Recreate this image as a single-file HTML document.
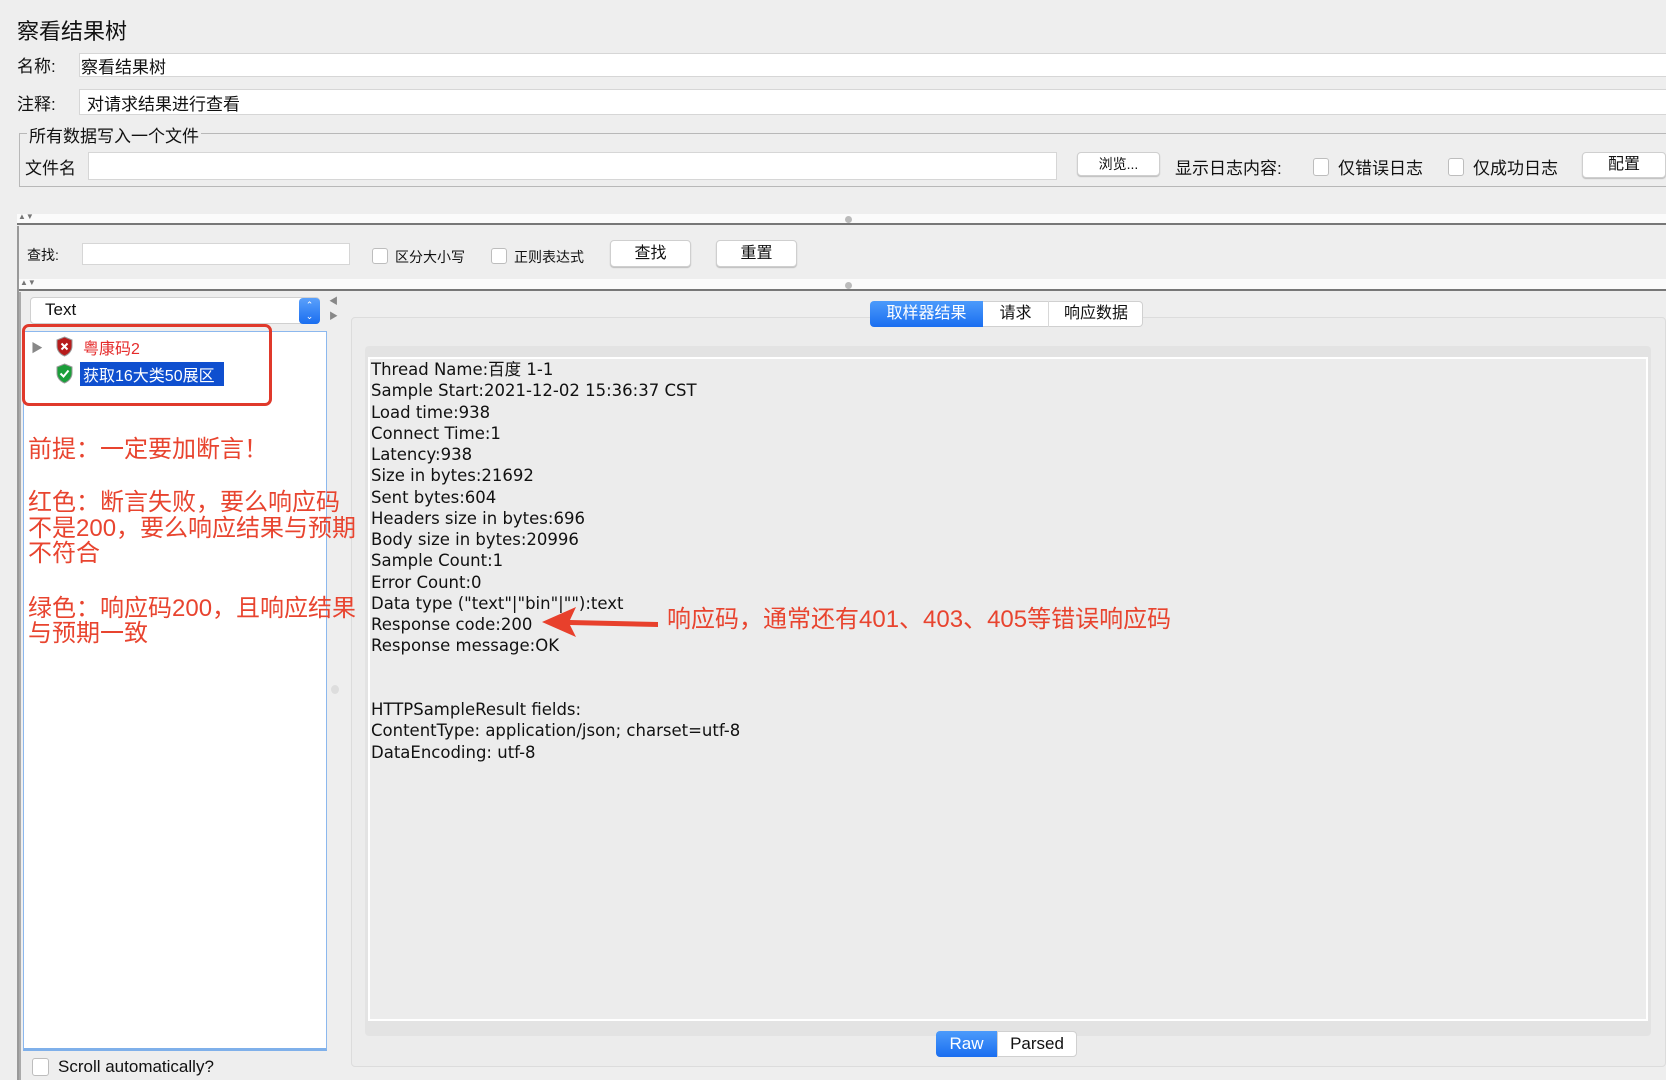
<!DOCTYPE html>
<html><head><meta charset="utf-8">
<style>
*{box-sizing:border-box;margin:0;padding:0}
body{width:1666px;height:1080px;background:#eeeeee;position:relative;overflow:hidden;font-family:"Liberation Sans","Noto Sans CJK SC",sans-serif;color:#111}
.a{position:absolute;white-space:nowrap}
.f{position:absolute;background:#fff;border:1px solid #d6d6d6}
.btn{position:absolute;background:#fff;border:1px solid #cfcfcf;border-radius:4px;box-shadow:0 1px 1px #bbb;text-align:center;font-size:16px}
.cb{position:absolute;width:16px;height:16px;background:#fff;border:1px solid #bdbdbd;border-radius:3px}
.t{font-family:"DejaVu Sans","Noto Sans CJK SC",sans-serif;font-size:16.5px;line-height:21.25px}
.red{color:#e8442f;font-size:24px;line-height:25px;z-index:5}
</style></head><body>
<div class="a" style="left:17px;top:14px;font-size:22px">察看结果树</div>
<div class="a" style="left:17px;top:52px;font-size:17px">名称:</div>
<div class="f" style="left:79px;top:53px;width:1600px;height:24px"></div>
<div class="a" style="left:81px;top:53px;font-size:17px">察看结果树</div>
<div class="a" style="left:17px;top:90px;font-size:17px">注释:</div>
<div class="f" style="left:79px;top:89px;width:1600px;height:26px"></div>
<div class="a" style="left:87px;top:90px;font-size:17px">对请求结果进行查看</div>

<div style="position:absolute;left:19px;top:133px;width:1660px;height:54px;border:1px solid #b8b8b8;border-right:none"></div>
<div class="a" style="left:27px;top:122px;font-size:17px;background:#eeeeee;padding:0 2px">所有数据写入一个文件</div>
<div class="a" style="left:25px;top:154px;font-size:17px">文件名</div>
<div class="f" style="left:88px;top:152px;width:969px;height:28px"></div>
<div class="btn" style="left:1077px;top:152px;width:83px;height:24px;font-size:14px;line-height:22px">浏览...</div>
<div class="a" style="left:1175px;top:154px;font-size:17px">显示日志内容:</div>
<div class="cb" style="left:1313px;top:158px;height:18px"></div>
<div class="a" style="left:1338px;top:154px;font-size:17px">仅错误日志</div>
<div class="cb" style="left:1448px;top:158px;height:18px"></div>
<div class="a" style="left:1473px;top:154px;font-size:17px">仅成功日志</div>
<div class="btn" style="left:1582px;top:152px;width:84px;height:26px;line-height:24px">配置</div>

<div style="position:absolute;left:17px;top:214px;width:1649px;height:11px;background:#fbfbfb;border-bottom:2px solid #777"></div>
<div class="a" style="left:18px;top:212px;font-size:8px;color:#777">▲▼</div>
<div style="position:absolute;left:845px;top:216px;width:7px;height:7px;border-radius:50%;background:#bbb"></div>
<div style="position:absolute;left:17px;top:226px;width:2px;height:854px;background:#999"></div>

<div class="a" style="left:27px;top:245px;font-size:14px">查找:</div>
<div class="f" style="left:82px;top:243px;width:268px;height:22px"></div>
<div class="cb" style="left:372px;top:248px"></div>
<div class="a" style="left:395px;top:247px;font-size:14px">区分大小写</div>
<div class="cb" style="left:491px;top:248px"></div>
<div class="a" style="left:514px;top:247px;font-size:14px">正则表达式</div>
<div class="btn" style="left:610px;top:240px;width:81px;height:27px;line-height:25px">查找</div>
<div class="btn" style="left:716px;top:240px;width:81px;height:27px;line-height:25px">重置</div>

<div style="position:absolute;left:19px;top:279px;width:1647px;height:12px;background:#fbfbfb;border-bottom:2px solid #777"></div>
<div class="a" style="left:20px;top:278px;font-size:8px;color:#777">▲▼</div>
<div style="position:absolute;left:845px;top:282px;width:7px;height:7px;border-radius:50%;background:#bbb"></div>
<div style="position:absolute;left:19px;top:292px;width:2px;height:788px;background:#aaa"></div>

<div style="position:absolute;left:30px;top:297px;width:290px;height:27px;background:#fff;border:1px solid #d0d0d0;border-radius:4px"></div>
<div class="a" style="left:45px;top:300px;font-size:17px">Text</div>
<div style="position:absolute;left:299px;top:298px;width:21px;height:26px;background:linear-gradient(#5aa0fb,#1a6ef0);border-radius:4px;color:#fff;font-size:9px;line-height:11px;text-align:center;padding-top:2px">⌃<br>⌄</div>
<div class="a" style="left:329px;top:294px;font-size:9px;color:#888">◀</div>
<div class="a" style="left:329px;top:309px;font-size:9px;color:#888">▶</div>

<div style="position:absolute;left:23px;top:331px;width:304px;height:720px;background:#fff;border:1px solid #8cb8ee;border-bottom:3px solid #7fb0ea"></div>
<div style="position:absolute;left:22px;top:324px;width:250px;height:82px;border:3px solid #e0392b;border-radius:7px"></div>
<div class="a" style="left:31px;top:339px;font-size:12px;color:#888">▶</div>
<svg class="a" style="left:55px;top:336px" width="19" height="21" viewBox="0 0 19 21"><path d="M9.5 1L17 4v6c0 5-3.5 8.5-7.5 10C5.5 18.5 2 15 2 10V4z" fill="#b71c1c" stroke="#999"/><path d="M6.5 7.5l6 6M12.5 7.5l-6 6" stroke="#fff" stroke-width="2"/></svg>
<div class="a" style="left:83px;top:335px;font-size:16px;color:#e52b2b">粤康码2</div>
<svg class="a" style="left:55px;top:363px" width="19" height="21" viewBox="0 0 19 21"><path d="M9.5 1L17 4v6c0 5-3.5 8.5-7.5 10C5.5 18.5 2 15 2 10V4z" fill="#1b9e3a" stroke="#999"/><path d="M5.5 10.5l3 3 5-6" stroke="#fff" stroke-width="2" fill="none"/></svg>
<div class="a" style="left:80px;top:362px;width:144px;height:24px;background:#0f4fcf"></div>
<div class="a" style="left:83px;top:362px;font-size:16px;color:#fff">获取16大类50展区</div>

<div class="a red" style="left:28px;top:437px">前提：一定要加断言！</div>
<div class="a red" style="left:28px;top:490px">红色：断言失败，要么响应码</div>
<div class="a red" style="left:28px;top:516px">不是200，要么响应结果与预期</div>
<div class="a red" style="left:28px;top:541px">不符合</div>
<div class="a red" style="left:28px;top:596px">绿色：响应码200，且响应结果</div>
<div class="a red" style="left:28px;top:621px">与预期一致</div>
<div style="position:absolute;left:331px;top:685px;width:8px;height:9px;border-radius:50%;background:#ddd"></div>

<div style="position:absolute;left:32px;top:1058px;width:17px;height:18px;background:#fff;border:1px solid #bdbdbd;border-radius:3px"></div>
<div class="a" style="left:58px;top:1057px;font-size:17px">Scroll automatically?</div>

<div style="position:absolute;left:351px;top:317px;width:1315px;height:750px;background:#ececec;border:1px solid #dcdcdc;border-radius:4px"></div>
<div style="position:absolute;left:365px;top:346px;width:1286px;height:690px;background:#e3e3e3;border-radius:4px"></div>
<div style="position:absolute;left:368px;top:357px;width:1280px;height:664px;background:#ececec;border:2px solid #fff"></div>
<div class="a" style="left:870px;top:301px;width:113px;height:26px;background:linear-gradient(#4c9bfb,#1a6ef0);border-radius:4px 0 0 4px;color:#fff;font-size:16px;line-height:26px;text-align:center">取样器结果</div>
<div class="a" style="left:983px;top:301px;width:160px;height:26px;background:#fff;border:1px solid #d0d0d0;border-left:none;border-radius:0 4px 4px 0"></div>
<div class="a" style="left:983px;top:301px;width:66px;height:26px;border-right:1px solid #d8d8d8;font-size:16px;line-height:26px;text-align:center">请求</div>
<div class="a" style="left:1049px;top:301px;width:94px;height:26px;font-size:16px;line-height:26px;text-align:center">响应数据</div>

<div class="a t" style="left:371px;top:359px">Thread Name:百度 1-1<br>Sample Start:2021-12-02 15:36:37 CST<br>Load time:938<br>Connect Time:1<br>Latency:938<br>Size in bytes:21692<br>Sent bytes:604<br>Headers size in bytes:696<br>Body size in bytes:20996<br>Sample Count:1<br>Error Count:0<br>Data type ("text"|"bin"|""):text<br>Response code:200<br>Response message:OK<br><br><br>HTTPSampleResult fields:<br>ContentType: application/json; charset=utf-8<br>DataEncoding: utf-8</div>

<svg class="a" style="left:540px;top:603px" width="120" height="38" viewBox="0 0 120 38"><path d="M118 19L30 17L36 4L2 19L36 34L30 22L118 24Z" fill="#e8402c"/></svg>
<div class="a red" style="left:667px;top:607px">响应码，通常还有401、403、405等错误响应码</div>

<div class="a" style="left:936px;top:1031px;width:61px;height:26px;background:linear-gradient(#4c9bfb,#1a6ef0);border-radius:4px 0 0 4px;color:#fff;font-size:17px;line-height:26px;text-align:center">Raw</div>
<div class="a" style="left:997px;top:1031px;width:80px;height:26px;background:#fff;border:1px solid #d0d0d0;border-radius:0 4px 4px 0;font-size:17px;line-height:24px;text-align:center">Parsed</div>
</body></html>
